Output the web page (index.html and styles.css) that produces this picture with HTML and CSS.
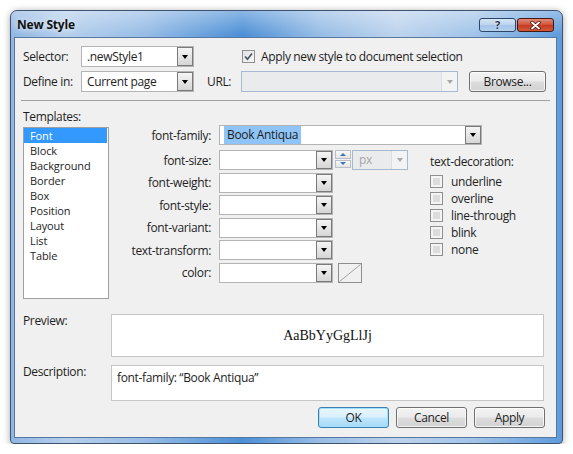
FILE: index.html
```html
<!DOCTYPE html>
<html lang="en">
<head>
    <meta charset="UTF-8">
    <title>New Style</title>
    <link rel="stylesheet" href="styles.css">
</head>
<body>
    <div class="window">
        <div class="titlebar">
            <span class="title">New Style</span>
            <div class="caption">
                <span class="cap-btn help">?</span>
                <span class="cap-btn close">
                    <svg width="11" height="9" viewBox="0 0 11 9">
                        <path d="M2 1.5 L9 7.5 M9 1.5 L2 7.5" stroke="#4a1a10" stroke-width="3.4" stroke-linecap="round"/>
                        <path d="M2 1.5 L9 7.5 M9 1.5 L2 7.5" stroke="#fff" stroke-width="1.8" stroke-linecap="round"/>
                    </svg>
                </span>
            </div>
        </div>

        <div class="client">
            <div class="row">
                <span class="lbl lbl-head">Selector:</span>
                <div class="select sel-head"><span class="value">.newStyle1</span><span class="drop"></span></div>
                <div class="check apply">
                    <span class="box checked">
                        <svg width="11" height="11" viewBox="0 0 11 11"><path d="M2 5.5 L4.5 8.2 L9 2.5" fill="none" stroke="#4b5563" stroke-width="1.7"/></svg>
                    </span>
                    Apply new style to document selection
                </div>
            </div>
            <div class="row">
                <span class="lbl lbl-head">Define in:</span>
                <div class="select sel-head"><span class="value">Current page</span><span class="drop"></span></div>
                <span class="lbl url-lbl">URL:</span>
                <div class="select disabled url"><span class="value"></span><span class="drop"></span></div>
                <button class="btn browse">Browse...</button>
            </div>

            <div class="separator"></div>

            <div class="main">
                <div class="templates">
                    <div class="lbl">Templates:</div>
                    <ul class="list">
                        <li class="selected">Font</li>
                        <li>Block</li>
                        <li>Background</li>
                        <li>Border</li>
                        <li>Box</li>
                        <li>Position</li>
                        <li>Layout</li>
                        <li>List</li>
                        <li>Table</li>
                    </ul>
                </div>

                <div class="props">
                    <div class="field">
                        <span class="field-lbl">font-family:</span>
                        <div class="select family"><span class="value"><span class="hl">Book Antiqua</span></span><span class="drop"></span></div>
                    </div>
                    <div class="props-body">
                        <div class="fields">
                            <div class="field">
                                <span class="field-lbl">font-size:</span>
                                <div class="select"><span class="value"></span><span class="drop"></span></div>
                                <div class="spin"><span class="up"></span><span class="down"></span></div>
                                <div class="select disabled unit"><span class="value">px</span><span class="drop"></span></div>
                            </div>
                            <div class="field">
                                <span class="field-lbl">font-weight:</span>
                                <div class="select"><span class="value"></span><span class="drop"></span></div>
                            </div>
                            <div class="field">
                                <span class="field-lbl">font-style:</span>
                                <div class="select"><span class="value"></span><span class="drop"></span></div>
                            </div>
                            <div class="field">
                                <span class="field-lbl">font-variant:</span>
                                <div class="select"><span class="value"></span><span class="drop"></span></div>
                            </div>
                            <div class="field">
                                <span class="field-lbl">text-transform:</span>
                                <div class="select"><span class="value"></span><span class="drop"></span></div>
                            </div>
                            <div class="field">
                                <span class="field-lbl">color:</span>
                                <div class="select"><span class="value"></span><span class="drop"></span></div>
                                <span class="swatch">
                                    <svg width="22" height="18" viewBox="0 0 22 18"><path d="M0.5 17.5 L21.5 0.5" stroke="#a0a0a0" stroke-width="1"/></svg>
                                </span>
                            </div>
                        </div>

                        <div class="decoration">
                            <div class="deco-title">text-decoration:</div>
                            <div class="check deco"><span class="box"></span>underline</div>
                            <div class="check deco"><span class="box"></span>overline</div>
                            <div class="check deco"><span class="box"></span>line-through</div>
                            <div class="check deco"><span class="box"></span>blink</div>
                            <div class="check deco"><span class="box"></span>none</div>
                        </div>
                    </div>
                </div>
            </div>

            <div class="bottom-row preview-row">
                <span class="side-lbl">Preview:</span>
                <div class="preview">AaBbYyGgLlJj</div>
            </div>
            <div class="bottom-row desc-row">
                <span class="side-lbl">Description:</span>
                <div class="desc">font-family: “Book Antiqua”</div>
            </div>

            <div class="buttons">
                <button class="btn default">OK</button>
                <button class="btn">Cancel</button>
                <button class="btn">Apply</button>
            </div>
        </div>
    </div>
</body>
</html>
```

FILE: styles.css
```css
* {
    box-sizing: border-box;
}
body {
    margin: 0;
    background: #fff;
    font-family: "Open Sans", "Noto Sans", sans-serif;
    font-size: 12px;
    letter-spacing: -0.35px;
    color: #1e1e1e;
}
.window {
    margin: 10px 0 0 10px;
    width: 553px;
    height: 434px;
    border: 1px solid #3f5270;
    border-radius: 7px 7px 4px 4px;
    padding: 0 5px 5px 3px;
    display: flex;
    flex-direction: column;
    background:
        linear-gradient(180deg, rgba(255,255,255,0.35) 0px, rgba(255,255,255,0) 24px),
        linear-gradient(90deg, #8fb6e2 0%, #b5cfec 10%, #98bde6 24%, #4c8fd6 42%, #97bde6 56%, #bcd3ed 70%, #a2c4e9 84%, #5e9bdb 100%);
    box-shadow: 0 1px 7px rgba(0,0,0,0.35);
}
.titlebar {
    height: 26px;
    display: flex;
    justify-content: space-between;
    align-items: flex-start;
    padding-left: 3px;
}
.title {
    font-weight: bold;
    line-height: 16px;
    margin-top: 6px;
    color: #111;
    letter-spacing: -0.2px;
    text-shadow: 0 0 6px rgba(255,255,255,0.9);
}
.caption {
    display: flex;
    gap: 1px;
    margin-top: 7px;
    margin-right: 3px;
}
.cap-btn {
    width: 37px;
    height: 14px;
    border: 1px solid #2c4666;
    border-radius: 3px;
    display: flex;
    align-items: center;
    justify-content: center;
}
.help {
    background: linear-gradient(#d6e5f5 0%, #bcd3ec 50%, #a4c3e6 51%, #b4d0ef 100%);
    font-weight: bold;
    font-size: 11px;
    line-height: 12px;
    color: #26364d;
    text-shadow: 0 0 2px #fff;
}
.close {
    border-color: #45170f;
    background: linear-gradient(#e08a78 0%, #d3583f 45%, #c23a22 50%, #d05a3c 100%);
}
.client {
    flex: 1;
    background: #f0f0f0;
    border: 1px solid #56779f;
    padding: 8px 10px 0 8px;
}
.row {
    display: flex;
    align-items: center;
    height: 21px;
}
.row + .row {
    margin-top: 4px;
}
.lbl-head {
    width: 58px;
}
.select {
    display: flex;
    height: 21px;
    background: #fff;
    border: 1px solid #b4b4b4;
}
.select .value {
    flex: 1;
    padding-left: 5px;
    line-height: 19px;
    overflow: hidden;
    white-space: nowrap;
}
.drop {
    width: 16px;
    border: 1px solid #7a7a7a;
    background: linear-gradient(#f5f5f5, #d6d6d6);
    display: flex;
    align-items: center;
    justify-content: center;
}
.drop::after {
    content: "";
    border-left: 3.5px solid transparent;
    border-right: 3.5px solid transparent;
    border-top: 4px solid #000;
}
.sel-head {
    width: 113px;
}
.apply {
    margin-left: 48px;
}
.check {
    display: flex;
    align-items: center;
    gap: 6px;
}
.box {
    width: 13px;
    height: 13px;
    border: 1px solid #8f8f8f;
    background: #dcdcdc;
    box-shadow: inset 0 0 0 2px #f4f4f4;
    display: flex;
    align-items: center;
    justify-content: center;
}
.box.checked {
    background: linear-gradient(135deg, #e0e0e0, #fafafa);
    box-shadow: none;
}
.url-lbl {
    margin-left: 13px;
    width: 34px;
}
.select.disabled {
    background: #eaebed;
    border-color: #a7b9d1;
    color: #a6a6a6;
}
.select.disabled .drop {
    border: none;
    border-left: 1px solid #d9dee6;
    background: #f3f3f3;
}
.select.disabled .drop::after {
    border-top-color: #a8a8a8;
}
.url {
    width: 217px;
}
.btn {
    height: 21px;
    width: 71px;
    padding: 0;
    border: 1px solid #707070;
    border-radius: 3px;
    background: linear-gradient(#f3f3f3 0%, #ebebeb 48%, #dddddd 52%, #d2d2d2 100%);
    box-shadow: inset 0 0 0 1px rgba(255,255,255,0.75);
    font: inherit;
    letter-spacing: inherit;
    color: #1e1e1e;
}
.browse {
    width: 77px;
    margin-left: 11px;
}
.separator {
    height: 1px;
    background: #a0a0a0;
    margin: 8px -4px 0 -2px;
}
.main {
    display: flex;
    margin-top: 8px;
}
.templates .lbl {
    line-height: 16px;
    margin-bottom: 2px;
}
.list {
    list-style: none;
    margin: 0;
    padding: 0;
    width: 86px;
    height: 172px;
    background: #fff;
    border: 1px solid #a0a0a0;
    font-size: 11px;
    letter-spacing: -0.1px;
}
.list li {
    height: 15px;
    line-height: 15px;
    padding-left: 6px;
    margin-right: 1px;
}
.list li.selected {
    background: #3399ff;
    color: #fff;
}
.props {
    margin-top: 16px;
}
.field {
    display: flex;
    align-items: center;
    height: 20px;
}
.field-lbl {
    width: 102px;
    margin-right: 8px;
    text-align: right;
}
.field .select {
    height: 20px;
    width: 114px;
}
.field .select .value {
    line-height: 18px;
}
.field .select.family {
    width: 263px;
}
.hl {
    background: #8ec4f7;
    padding: 0 3px 1px 3px;
    margin-left: -1px;
}
.props-body {
    display: flex;
    margin-top: 5px;
}
.fields {
    display: flex;
    flex-direction: column;
    gap: 2.6px;
    width: 299px;
}
.spin {
    width: 16px;
    height: 18px;
    margin-left: 2px;
    display: flex;
    flex-direction: column;
    gap: 1px;
    align-self: flex-start;
}
.spin span {
    flex: 1;
    border: 1px solid #b9bfc8;
    background: linear-gradient(#f8f8f8, #e4e4e4);
    display: flex;
    align-items: center;
    justify-content: center;
}
.spin .up::after {
    content: "";
    border-left: 3px solid transparent;
    border-right: 3px solid transparent;
    border-bottom: 3px solid #4573b5;
}
.spin .down::after {
    content: "";
    border-left: 3px solid transparent;
    border-right: 3px solid transparent;
    border-top: 3px solid #4573b5;
}
.field .select.unit {
    width: 56px;
    margin-left: 1px;
}
.unit .value {
    padding-left: 6px;
}
.swatch {
    width: 24px;
    height: 20px;
    margin-left: 5px;
    border: 1px solid #8d8d8d;
    background: #f0f0f0;
    display: flex;
}
.decoration {
    margin-left: 22px;
    margin-top: 4px;
}
.deco-title {
    line-height: 16px;
    margin-bottom: 3px;
}
.check.deco {
    height: 17px;
    gap: 8px;
}
.bottom-row {
    display: flex;
    align-items: flex-start;
}
.preview-row {
    margin-top: 15px;
}
.desc-row {
    margin-top: 8px;
}
.side-lbl {
    width: 88px;
    line-height: 16px;
    margin-top: -1px;
}
.preview {
    width: 433px;
    height: 43px;
    background: #fff;
    border: 1px solid #c6c6c6;
    display: flex;
    align-items: center;
    justify-content: center;
    font-family: "Liberation Serif", serif;
    font-size: 14px;
    letter-spacing: 0;
    color: #111;
}
.desc {
    width: 433px;
    height: 36px;
    background: #fff;
    border: 1px solid #c6c6c6;
    padding: 4px 5px;
    line-height: 16px;
}
.buttons {
    display: flex;
    justify-content: flex-end;
    gap: 7px;
    margin-top: 6px;
    margin-right: 1px;
}
.btn.default {
    border-color: #3c7fb1;
    background: linear-gradient(#eaf6fd 0%, #d9f0fc 48%, #bee6fd 52%, #a7d9f5 100%);
    box-shadow: inset 0 0 0 1px #9fe0fb;
}
```
